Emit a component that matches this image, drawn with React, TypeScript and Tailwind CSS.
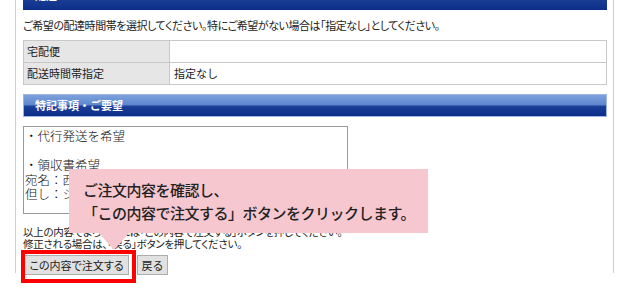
import React from "react";

const jp = { fontFamily: '"Noto Sans CJK JP", "Noto Sans", sans-serif' };

export default function App() {
  return (
    <div className="relative w-[630px] h-[290px] overflow-hidden bg-white text-[#222]" style={jp}>
      <div className="ml-[15px] w-[599px] h-[290px] border-x border-[#cfcfcf] pl-[7px] pr-[6px]">
        {/* top bar (cut off) */}
        <div className="mt-[-17px] h-[27px] bg-[linear-gradient(to_bottom,#4a72bd_0%,#1e4296_50%,#0c2f8a_100%)] pl-[12px] text-[11px] font-bold leading-[24px] text-white">
          配送
        </div>
        <p className="mt-[8px] h-[14px] whitespace-nowrap text-[11px] leading-[14px] tracking-[-0.45px] [font-feature-settings:'palt']">
          ご希望の配達時間帯を選択してください。特にご希望がない場合は「指定なし」としてください。
        </p>
        <table className="mt-[8px] w-[584px] border-collapse border border-[#999] text-[11px]">
          <tbody>
            <tr className="h-[22px]">
              <td className="w-[146px] border border-[#c8c8c8] bg-[#e6e6e6] pl-[3px]">宅配便</td>
              <td className="border border-[#c8c8c8] pl-[4px]"></td>
            </tr>
            <tr className="h-[22px]">
              <td className="w-[146px] border border-[#c8c8c8] bg-[#e6e6e6] pl-[3px]">配送時間帯指定</td>
              <td className="border border-[#c8c8c8] pl-[4px]">指定なし</td>
            </tr>
          </tbody>
        </table>
        <div className="mt-[9px] h-[23px] border border-[#9fb6e0] bg-[linear-gradient(to_bottom,#7ca1dc_0%,#5f88cf_45%,#1a3f97_55%,#0b2d8a_100%)] pl-[11px] text-[11px] font-bold leading-[21px] text-white">
          特記事項・ご要望
        </div>
        <div className="mt-[9px] h-[88px] w-[325px] overflow-hidden whitespace-pre border border-[#999] pl-[1px] pt-[2px] text-[12.5px] font-light leading-[14.5px] text-[#111]">
          {"・代行発送を希望\n\n・領収書希望\n宛名：西山商事株式会社\n但し：システム利用料として"}
        </div>
        <div className="mt-[12px] whitespace-nowrap text-[10.5px] leading-[12px] tracking-[-0.3px] [font-feature-settings:'palt']">
          <p>以上の内容でよろしければ「この内容で注文する」ボタンを押してください。</p>
          <p>修正される場合は、「戻る」ボタンを押してください。</p>
        </div>
        <div className="mt-[5px] flex gap-[8px] pl-[1px]">
          <button className="h-[20px] w-[105px] whitespace-nowrap border border-[#adadad] bg-[#e1e1e1] p-0 text-[11px] leading-[18px] [font-feature-settings:'palt']">
            この内容で注文する
          </button>
          <button className="h-[20px] w-[31px] whitespace-nowrap border border-[#adadad] bg-[#e1e1e1] p-0 text-[11px] leading-[18px]">
            戻る
          </button>
        </div>
      </div>

      {/* callout */}
      <div className="absolute left-[69px] top-[169px] h-[64px] w-[359px] bg-[#f6c7cf] pl-[14px] pt-[9px] text-[15px] font-medium leading-[23px] tracking-[-0.5px] text-[#222]">
        <p>ご注文内容を確認し、</p>
        <p>「この内容で注文する」ボタンをクリックします。</p>
      </div>
      <svg className="absolute left-[98px] top-[232px]" width="32" height="19" viewBox="0 0 32 19">
        <polygon points="0,0 32,0 16,18" fill="#f6c7cf" />
      </svg>

      {/* red highlight */}
      <div className="absolute left-[21px] top-[250px] h-[33px] w-[115px] border-4 border-[#ff0000]" />
    </div>
  );
}
